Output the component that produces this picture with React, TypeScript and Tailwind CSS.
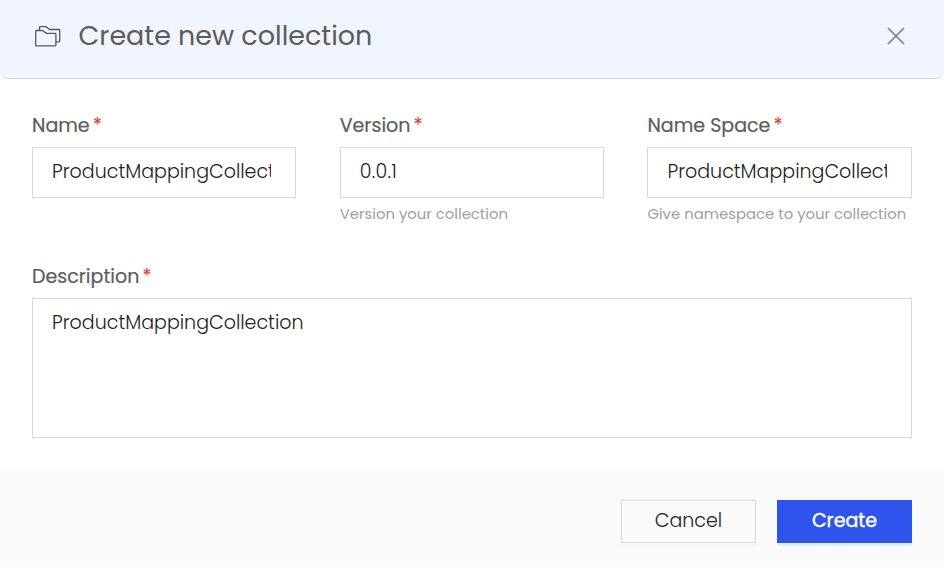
import type { ReactNode } from "react";

function Label({ children }: { children: string }) {
  return (
    <label className="flex h-[30px] items-center gap-[3px] text-[19.05px] leading-[30px] whitespace-nowrap text-[#5c5c5c]">
      <span className="[-webkit-text-stroke:0.2px_#5c5c5c]">{children}</span>
      <span className="text-[#e8352a]">*</span>
    </label>
  );
}

function Field({ label, help, children }: { label: string; help?: ReactNode; children: ReactNode }) {
  return (
    <div className="min-w-0">
      <Label>{label}</Label>
      <div className="mt-[6px] h-[51px] border border-[#d9d9d9] pr-6 pl-[19px]">
        <div className="overflow-hidden text-[19.05px] leading-[48px] font-light whitespace-nowrap text-[#222]">{children}</div>
      </div>
      <div className="mt-[6px] h-5 text-[14.87px] leading-5 whitespace-nowrap text-[#a0a0a0]">{help}</div>
    </div>
  );
}

export default function App() {
  return (
    <div className="flex h-[567px] w-[944px] flex-col overflow-hidden bg-white font-['Poppins','Inter',sans-serif]">
      <header className="flex h-[79px] shrink-0 items-center rounded-b-[8px] border-b border-[#d5d9de] bg-[#f0f5ff] pr-[38px] pb-[6px] pl-[34px]">
        <svg width="28" height="22" viewBox="0 0 28 22" fill="none" stroke="#55575c" strokeWidth="1.3" strokeLinejoin="round">
          <path d="M1.7 20.5V6.3q0-.8.8-.8H8.5l4 2.9h8.6q.8 0 .8.8v10.9q0 .8-.8.8H2.5q-.8 0-.8-.8z" />
          <path d="M5.5 5.3V2.4q0-.8.8-.8h5.6l3.7 2.9h9.3q.8 0 .8.8v10.8q0 .8-.8.8h-2.8" />
        </svg>
        <h1 className="ml-[16.5px] text-[26.97px] leading-[40px] whitespace-nowrap text-[#5c5c5c]">Create new collection</h1>
        <svg className="ml-auto" width="20" height="20" viewBox="0 0 20 20" fill="none" stroke="#7d8088" strokeWidth="1.7">
          <path d="m2 2 16 16M18 2 2 18" />
        </svg>
      </header>
      <main className="h-[391px] shrink-0 px-8 pt-8">
        <div className="grid grid-cols-[264px_264px_264.6px] justify-between">
          <Field label="Name">ProductMappingCollection</Field>
          <Field label="Version" help="Version your collection"><span className="tracking-[0.3px]">0.0.1</span></Field>
          <Field label="Name Space" help="Give namespace to your collection">ProductMappingCollection</Field>
        </div>
        <div className="mt-[38px]">
          <Label>Description</Label>
          <div className="mt-[6px] h-[140px] border border-[#d9d9d9] px-[19px] pt-[9px] text-[19.05px] leading-[29px] font-light text-[#222]">ProductMappingCollection</div>
        </div>
      </main>
      <footer className="flex flex-1 items-start justify-end gap-[21px] bg-[#fafafa] pt-[30px] pr-8">
        <button className="flex h-[43px] w-[135px] justify-center border border-[#d9d9d9] text-[19px] leading-[40px] font-light text-[#222] shadow-[0_3px_0_#f6f6f6]">Cancel</button>
        <button className="flex h-[43px] w-[135px] justify-center bg-[#2f54eb] text-[19px] leading-[42px] text-white shadow-[0_3px_0_#e7f0fa] [-webkit-text-stroke:0.4px_white]">Create</button>
      </footer>
    </div>
  );
}
